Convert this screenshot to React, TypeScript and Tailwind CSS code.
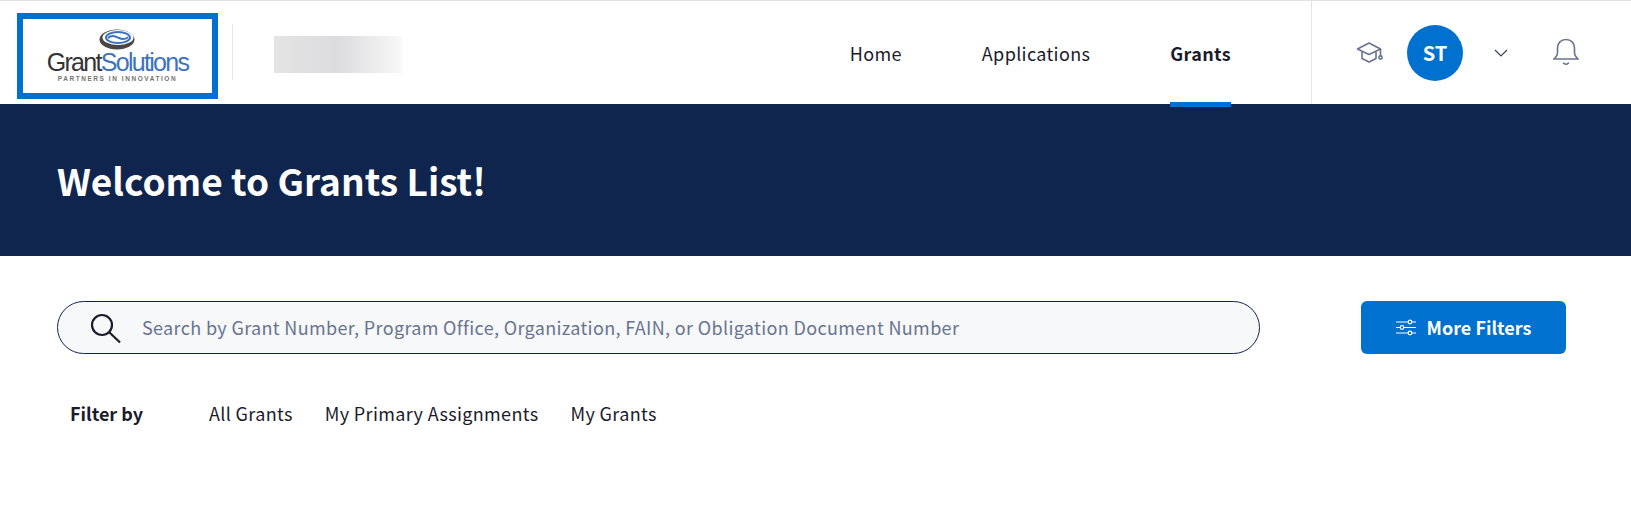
const Logo = () => (
    <div className="flex flex-col items-center leading-none">
        <svg width="36" height="21" viewBox="0 0 36 21" className="mb-[-1px]">
            <ellipse cx="18" cy="10.5" rx="17.5" ry="10" fill="#4a4644" />
            <ellipse cx="19" cy="8.5" rx="15.5" ry="7.5" fill="#fff" />
            <ellipse cx="19" cy="8.5" rx="12" ry="5.5" fill="none" stroke="#3b73c0" strokeWidth="2" />
            <path d="M9 9c4-4 9-1 11 0s7 2 9-1" fill="none" stroke="#3b73c0" strokeWidth="2" />
        </svg>
        <div className="flex text-[25px] tracking-[-1.7px] leading-[26px] font-['Liberation_Sans',sans-serif]">
            <span className="text-[#333333]">Grant</span>
            <span className="text-[#3b73c0]">Solutions</span>
        </div>
        <div className="text-[6.5px] font-bold tracking-[1.55px] leading-[8px] text-[#77716c] font-['Liberation_Sans',sans-serif]">
            PARTNERS IN INNOVATION
        </div>
    </div>
);

const App = () => {
    return (
        <div className="h-[508px] w-[1631px] overflow-hidden bg-white font-['Noto_Sans_CJK_SC','Noto_Sans',sans-serif] text-[#1b1b2b]">
            <header className="flex h-[104px] border-t border-[#e2e2e2] bg-white">
                <div className="ml-[17px] mt-[12px] flex h-[86px] w-[201px] items-center justify-center border-[6px] border-[#0071ce] bg-white">
                    <Logo />
                </div>
                <div className="ml-[14px] mt-[23px] h-[56px] w-px bg-[#e4e4e4]" />
                <div className="ml-[41px] mt-[35px] h-[37px] w-[128px] bg-gradient-to-r from-[#e4e4e5] via-[#dcdcde] to-[#f8f8f8]" />
                <nav className="ml-auto flex h-[106px] items-start text-[18px] tracking-[0.35px]">
                    <a className="mt-[39px] mr-[80px] leading-[26px]">Home</a>
                    <a className="mt-[39px] mr-[80px] leading-[26px]">Applications</a>
                    <a className="mr-[80px] flex h-full flex-col justify-between border-b-[5px] border-[#0071ce] pt-[39px] font-bold leading-[26px]">
                        Grants
                    </a>
                </nav>
                <div className="flex h-full w-[320px] items-center border-l border-[#e4e4e4]">
                    <svg width="28" height="24" viewBox="0 0 28 24" fill="none" stroke="#68748f" strokeWidth="1.6" strokeLinejoin="round" className="ml-[44px]">
                        <path d="M13 2 1.5 8 13 13.5 24.5 8z" />
                        <path d="M6 11v6.5l7 3.5 7-3.5V11" />
                        <path d="M24.5 8v7" />
                        <circle cx="24.5" cy="16.5" r="1.6" />
                    </svg>
                    <div className="ml-[23px] flex h-[56px] w-[56px] items-center justify-center rounded-full bg-[#0071ce] text-[20px] font-bold text-white">
                        ST
                    </div>
                    <svg width="14" height="8" viewBox="0 0 14 8" fill="none" stroke="#3c4257" strokeWidth="1.2" className="ml-[31px]">
                        <path d="M1 1l6 6 6-6" />
                    </svg>
                    <svg width="26" height="29" viewBox="0 0 26 29" fill="none" stroke="#68748f" strokeWidth="1.6" strokeLinecap="round" className="ml-[45px]">
                        <path d="M1 21h24c-2-2-3.5-3-3.5-6V10C21.500 5 18 1.500 13 1.500S4.500 5 4.500 10v5c0 3-1.500 4-3.500 6z" />
                        <path d="M10.500 25c1.500 1.500 3.500 1.500 5 0" />
                    </svg>
                </div>
            </header>

            <section className="flex h-[152px] items-center bg-[#10254e] pl-[57px]">
                <h1 className="text-[37px] font-bold leading-none text-white">Welcome to Grants List!</h1>
            </section>

            <div className="mt-[45px] flex pl-[57px]">
                <div className="flex h-[53px] w-[1203px] items-center rounded-full border border-[#10254e] bg-[#f7f8fa]">
                    <svg width="32" height="32" viewBox="0 0 32 32" fill="none" stroke="#1b1b2b" strokeWidth="2.200" className="ml-[31px]">
                        <circle cx="13" cy="13" r="10" />
                        <path d="M20.500 20.500 31 30.500" />
                    </svg>
                    <span className="ml-[21px] text-[18px] tracking-[0.35px] text-[#68748f]">
                        Search by Grant Number, Program Office, Organization, FAIN, or Obligation Document Number
                    </span>
                </div>
                <button className="ml-[101px] flex h-[53px] w-[205px] items-center justify-center gap-[11px] rounded-[6px] bg-[#0071ce] text-[18px] font-bold text-white">
                    <svg width="20" height="17" viewBox="0 0 20 17" fill="none" stroke="#fff" strokeWidth="1.200">
                        <path d="M0 3h12M16 3h4M0 8.500h4M8 8.500h12M0 14h12M16 14h4" />
                        <circle cx="14" cy="3" r="1.800" />
                        <circle cx="6" cy="8.500" r="1.800" />
                        <circle cx="14" cy="14" r="1.800" />
                    </svg>
                    More Filters
                </button>
            </div>

            <div className="mt-[46px] flex items-center pl-[70px] text-[18px] leading-[26px] tracking-[0.35px]">
                <span className="w-[139px] font-bold tracking-normal">Filter by</span>
                <span className="mr-[32px]">All Grants</span>
                <span className="mr-[32px]">My Primary Assignments</span>
                <span>My Grants</span>
            </div>
        </div>
    );
};

export default App;
